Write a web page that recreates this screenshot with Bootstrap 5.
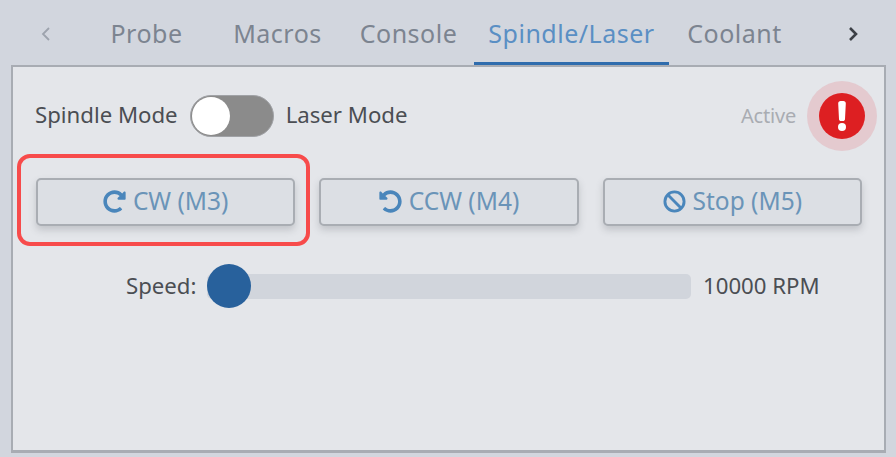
<!DOCTYPE html>
<html lang="en">
<head>
<meta charset="utf-8">
<title>Spindle/Laser</title>
<link href="https://cdn.jsdelivr.net/npm/bootstrap@5.3.0/dist/css/bootstrap.min.css" rel="stylesheet">
<style>
html, body { height: 100%; }
body { margin: 0; background: #d2d6de; font-family: "Noto Sans", "Open Sans", sans-serif; color: #4a4d52; overflow: hidden; }
.shell { padding: 0 10px 4px 11px; height: 100%; display: flex; flex-direction: column; }
.tabstrip { height: 65px; flex: none; flex-wrap: nowrap; }
.tabstrip .nav-link { height: 65px; padding: 6px 0 0; display: flex; align-items: center; justify-content: center; min-width: 131px; color: #7c8490; font-size: 25px; letter-spacing: .5px; border-bottom: 3px solid transparent; border-radius: 0; white-space: nowrap; }
.tabstrip .nav-link.active { color: #5a8fc4; border-bottom-color: #2f6cad; width: 195px; box-shadow: 0 1px 0 #a9cdf0; }
.tabstrip .arrow-l { min-width: 70px; color: #9da3ad; }
.tabstrip .arrow-r { min-width: 0; flex: 1; color: #3c4046; justify-content: flex-end; padding-right: 27px; }
.panelbox { flex: 1; background: #e4e6ea; border: 2px solid #a8acb3; padding: 27px 22px 0 23px; border-bottom-width: 3px; }
.toprow { height: 44px; }
.mode-text { font-size: 22.2px; line-height: 1; color: #4b4e53; margin-bottom: 2px; }
.mode-text.lead-in { margin-left: -1px; }
.form-switch.toggle-wrap { padding: 0; margin: 0 12px; min-height: 0; display: flex; }
.form-switch .toggle-input { width: 84px; height: 42px; margin: 0; float: none; background-color: #8b8b8b; border: 1px solid #a0a2a6; box-shadow: none; --bs-form-switch-bg: url("data:image/svg+xml,%3csvg xmlns='http://www.w3.org/2000/svg' viewBox='-4 -4 8 8'%3e%3ccircle r='3.8' fill='%23fff'/%3e%3c/svg%3e"); }
.active-label { font-size: 20px; color: #a9acb2; letter-spacing: -.2px; margin-right: 23px; }
.alert-dot { width: 46px; height: 46px; border-radius: 50%; background: #dd1f22; box-shadow: 0 0 0 12px rgba(226, 80, 90, .18); margin-right: -3px; flex: none; }
.btn-row { margin-top: 40px; column-gap: 24px; }
.btn-holder { flex: 1; position: relative; }
.btn.cmd-btn { width: 100%; height: 48px; padding: 0 0 2px; background: #dcdfe4; border: 2px solid #a9adb3; border-radius: 5px; color: #6a94b8; font-size: 24.5px; box-shadow: 0 4px 7px rgba(90, 95, 105, .25); display: flex; align-items: center; justify-content: center; gap: 7px; }
.cmd-btn svg { fill: #4a86bb; width: 23px; height: 23px; }
.callout { position: absolute; left: -19px; right: -15px; top: -24px; bottom: -20px; border: 4px solid #f74b4b; border-radius: 13px; pointer-events: none; }
.speed-row { margin-top: 38px; padding-left: 90px; height: 44px; }
.speed-label { font-size: 22.2px; color: #4b4e53; width: 81px; }
.form-range.speed-range { width: 484px; height: 44px; margin-left: 0; }
.speed-range::-webkit-slider-runnable-track { height: 25px; background: #d1d5dc; border-radius: 5px; }
.speed-range::-webkit-slider-thumb { width: 44px; height: 44px; margin-top: -9.5px; background: #28619c; border-radius: 50%; box-shadow: none; }
.speed-value { font-size: 22.2px; color: #4b4e53; margin-left: 12px; }
</style>
</head>
<body>
<div class="shell">
  <nav class="nav tabstrip">
    <a class="nav-link arrow-l" href="#"><svg width="12" height="16" viewBox="0 0 12 16" fill="none" stroke="currentColor" stroke-width="1.8"><path d="M9 2 3 8l6 6"/></svg></a>
    <a class="nav-link" href="#">Probe</a>
    <a class="nav-link" href="#">Macros</a>
    <a class="nav-link" href="#">Console</a>
    <a class="nav-link active" href="#">Spindle/Laser</a>
    <a class="nav-link" href="#">Coolant</a>
    <a class="nav-link arrow-r" href="#"><svg width="12" height="16" viewBox="0 0 12 16" fill="none" stroke="currentColor" stroke-width="2.6"><path d="M3 2l6 6-6 6"/></svg></a>
  </nav>
  <div class="panelbox">
    <div class="d-flex align-items-center toprow">
      <span class="mode-text lead-in">Spindle Mode</span>
      <div class="form-check form-switch toggle-wrap"><input class="form-check-input toggle-input" type="checkbox" role="switch" aria-label="Mode"></div>
      <span class="mode-text">Laser Mode</span>
      <span class="active-label ms-auto">Active</span>
      <div class="alert-dot d-flex align-items-center justify-content-center">
        <svg width="10" height="30" viewBox="0 0 10 30" fill="#fff"><path d="M1.2 2.5C1.1 1.1 2.2 0 3.6 0h2.8c1.4 0 2.5 1.1 2.4 2.5L8 18.2c-.1 1-.9 1.8-2 1.8H4c-1.1 0-1.9-.8-2-1.8z"/><circle cx="5" cy="26" r="4"/></svg>
      </div>
    </div>
    <div class="d-flex btn-row">
      <div class="btn-holder">
        <button type="button" class="btn cmd-btn"><svg viewBox="0 0 512 512"><path d="M256.455 8c66.269.119 126.437 26.233 170.859 68.685l35.715-35.715C478.149 25.851 504 36.559 504 57.941V192c0 13.255-10.745 24-24 24H345.941c-21.382 0-32.09-25.851-16.971-40.971l41.75-41.75c-30.864-28.899-70.801-44.907-113.23-45.273-92.398-.798-170.283 73.977-169.484 169.442C88.764 348.009 162.184 424 256 424c41.127 0 79.997-14.678 110.629-41.556 4.743-4.161 11.906-3.908 16.368.553l39.662 39.662c4.872 4.872 4.631 12.815-.482 17.433C378.202 479.813 319.926 504 256 504 119.034 504 8.001 392.967 8 256.002 7.999 119.193 119.646 7.755 256.455 8z"/></svg>CW (M3)</button>
        <span class="callout"></span>
      </div>
      <div class="btn-holder">
        <button type="button" class="btn cmd-btn"><svg viewBox="0 0 512 512"><path d="M255.545 8c-66.269.119-126.438 26.233-170.86 68.685L48.971 40.971C33.851 25.851 8 36.559 8 57.941V192c0 13.255 10.745 24 24 24h134.059c21.382 0 32.09-25.851 16.971-40.971l-41.75-41.75c30.864-28.899 70.801-44.907 113.23-45.273 92.398-.798 170.283 73.977 169.484 169.442C423.236 348.009 349.816 424 256 424c-41.127 0-79.997-14.678-110.63-41.556-4.743-4.161-11.906-3.908-16.368.553L89.34 422.659c-4.872 4.872-4.631 12.815.482 17.433C133.798 479.813 192.074 504 256 504c136.966 0 247.999-111.033 248-247.998C504.001 119.193 392.354 7.755 255.545 8z"/></svg>CCW (M4)</button>
      </div>
      <div class="btn-holder">
        <button type="button" class="btn cmd-btn"><svg viewBox="0 0 24 24"><circle cx="12" cy="12" r="10" fill="none" stroke="#4a86bb" stroke-width="3"/><path d="M5 5l14 14" fill="none" stroke="#4a86bb" stroke-width="3"/></svg>Stop (M5)</button>
      </div>
    </div>
    <div class="d-flex align-items-center speed-row">
      <span class="speed-label">Speed:</span>
      <input class="form-range speed-range" type="range" min="0" max="100" value="0" aria-label="Speed">
      <span class="speed-value">10000 RPM</span>
    </div>
  </div>
</div>
</body>
</html>
